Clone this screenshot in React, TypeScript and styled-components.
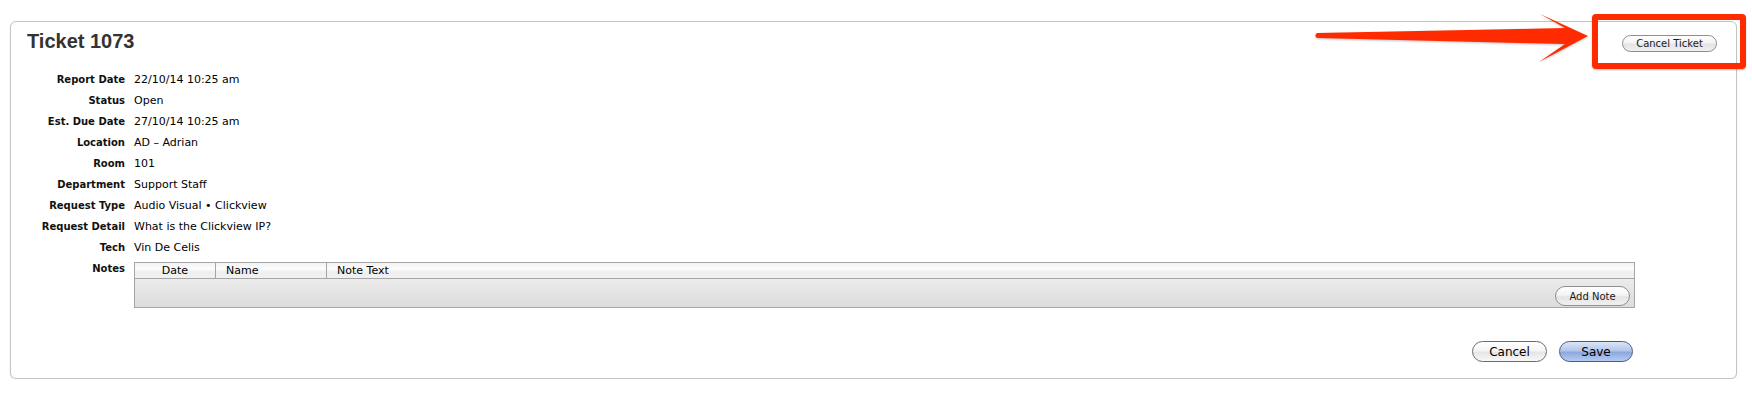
import { Fragment } from "react";
import { createGlobalStyle, styled, css } from "styled-components";

const GlobalStyle = createGlobalStyle`
  html, body {
    margin: 0;
    padding: 0;
    background: #ffffff;
  }
  body {
    font-family: "DejaVu Sans", "Noto Sans", sans-serif;
    color: #000;
  }
`;

const Page = styled.div`
  width: 1752px;
  box-sizing: border-box;
  padding: 21px 15px 0 10px;
`;

const Panel = styled.div`
  border: 1px solid #c4c4c4;
  border-radius: 6px;
  background: #fff;
  box-shadow: 0 1px 2px rgba(0, 0, 0, 0.1);
  padding: 7px 19px 16px 0;
`;

const Header = styled.div`
  display: flex;
  justify-content: space-between;
  align-items: flex-start;
  padding-left: 16px;
`;

const Title = styled.h1`
  margin: 0;
  font-family: "Liberation Sans", Arial, sans-serif;
  font-size: 20px;
  line-height: 24px;
  font-weight: bold;
  color: #333;
`;

const Callout = styled.div`
  position: relative;
  margin-top: 3px;
`;

const RedBox = styled.div`
  position: absolute;
  top: -18px;
  bottom: -17px;
  left: -30px;
  right: -29px;
  border: 6px solid #fe2a00;
  border-radius: 4px;
  box-shadow: 0 1px 2px rgba(0, 0, 0, 0.25);
  pointer-events: none;
`;

const Arrow = styled.svg`
  position: absolute;
  top: -22px;
  right: calc(100% + 33px);
  overflow: visible;
  filter: drop-shadow(0 1px 1px rgba(0, 0, 0, 0.25));
`;

const pill = css`
  box-sizing: border-box;
  border-radius: 12px;
  font-family: "DejaVu Sans", sans-serif;
  color: #1a1a1a;
  padding: 0;
  cursor: pointer;
`;

const SmallButton = styled.button<{ $w: number; $h: number }>`
  ${pill};
  width: ${(p) => p.$w}px;
  height: ${(p) => p.$h}px;
  font-size: 10px;
  border: 1px solid #8e8e8e;
  background: linear-gradient(
    to bottom,
    #ffffff 0%,
    #f4f4f4 45%,
    #e4e4e4 55%,
    #f0f0f0 100%
  );
`;

const BigButton = styled.button<{ $primary?: boolean }>`
  ${pill};
  width: ${(p) => (p.$primary ? 74 : 75)}px;
  height: 21px;
  font-size: 12px;
  border: 1px solid ${(p) => (p.$primary ? "#4a5b82" : "#6a6a6a")};
  background: ${(p) =>
    p.$primary
      ? "linear-gradient(to bottom, #dbe5f7 0%, #b3c7ec 45%, #8fa9de 55%, #b4cbf2 100%)"
      : "linear-gradient(to bottom, #ffffff 0%, #f6f6f6 45%, #e6e6e6 55%, #f8f8f8 100%)"};
  color: #000;
`;

const Fields = styled.div`
  display: grid;
  grid-template-columns: 114px 1fr;
  column-gap: 9px;
  margin-top: 16px;
  padding-right: 82px;
`;

const Label = styled.div`
  text-align: right;
  font-weight: bold;
  font-size: 10px;
  line-height: 21px;
  color: #111;
`;

const Value = styled.div`
  font-size: 11px;
  line-height: 21px;
`;

const NotesTable = styled.div`
  margin-top: 4px;
  border: 1px solid #a6a6a6;
`;

const NotesHead = styled.div`
  display: grid;
  grid-template-columns: 81px 111px 1fr;
  height: 15px;
  border-bottom: 1px solid #a6a6a6;
  background: linear-gradient(
    to bottom,
    #f2f2f2 0%,
    #fdfdfd 40%,
    #eeeeee 60%,
    #f1f1f1 100%
  );
`;

const HeadCell = styled.div<{ $center?: boolean }>`
  font-size: 11px;
  line-height: 15px;
  padding-left: ${(p) => (p.$center ? 0 : 10)}px;
  text-align: ${(p) => (p.$center ? "center" : "left")};
  border-right: 1px solid #a6a6a6;
  &:last-child {
    border-right: none;
  }
`;

const NotesBody = styled.div`
  height: 27px;
  display: flex;
  justify-content: flex-end;
  align-items: flex-end;
  padding: 0 4px 1px 0;
  background: linear-gradient(to bottom, #ebebeb 0%, #dcdcdc 100%);
`;

const Footer = styled.div`
  display: flex;
  justify-content: flex-end;
  gap: 12px;
  margin-top: 33px;
  padding-right: 84px;
`;

const fields: [string, string][] = [
  ["Report Date", "22/10/14 10:25 am"],
  ["Status", "Open"],
  ["Est. Due Date", "27/10/14 10:25 am"],
  ["Location", "AD \u2013 Adrian"],
  ["Room", "101"],
  ["Department", "Support Staff"],
  ["Request Type", "Audio Visual \u2022 Clickview"],
  ["Request Detail", "What is the Clickview IP?"],
  ["Tech", "Vin De Celis"],
];

export default function App() {
  return (
    <>
      <GlobalStyle />
      <Page>
        <Panel>
          <Header>
            <Title>Ticket 1073</Title>
            <Callout>
              <SmallButton $w={95} $h={17}>
                Cancel Ticket
              </SmallButton>
              <RedBox />
              <Arrow width="275" height="56" viewBox="0 0 275 56">
                <path
                  d="M4 23 L251 18 L226 4 L274 26 L225 52 L251 34 L4 28 A2.5 2.5 0 0 1 4 23 Z"
                  fill="#fe2a00"
                />
              </Arrow>
            </Callout>
          </Header>

          <Fields>
            {fields.map(([label, value]) => (
              <Fragment key={label}>
                <Label>{label}</Label>
                <Value>{value}</Value>
              </Fragment>
            ))}
            <Label>Notes</Label>
            <NotesTable>
              <NotesHead>
                <HeadCell $center>Date</HeadCell>
                <HeadCell>Name</HeadCell>
                <HeadCell>Note Text</HeadCell>
              </NotesHead>
              <NotesBody>
                <SmallButton $w={75} $h={20}>
                  Add Note
                </SmallButton>
              </NotesBody>
            </NotesTable>
          </Fields>

          <Footer>
            <BigButton>Cancel</BigButton>
            <BigButton $primary>Save</BigButton>
          </Footer>
        </Panel>
      </Page>
    </>
  );
}
